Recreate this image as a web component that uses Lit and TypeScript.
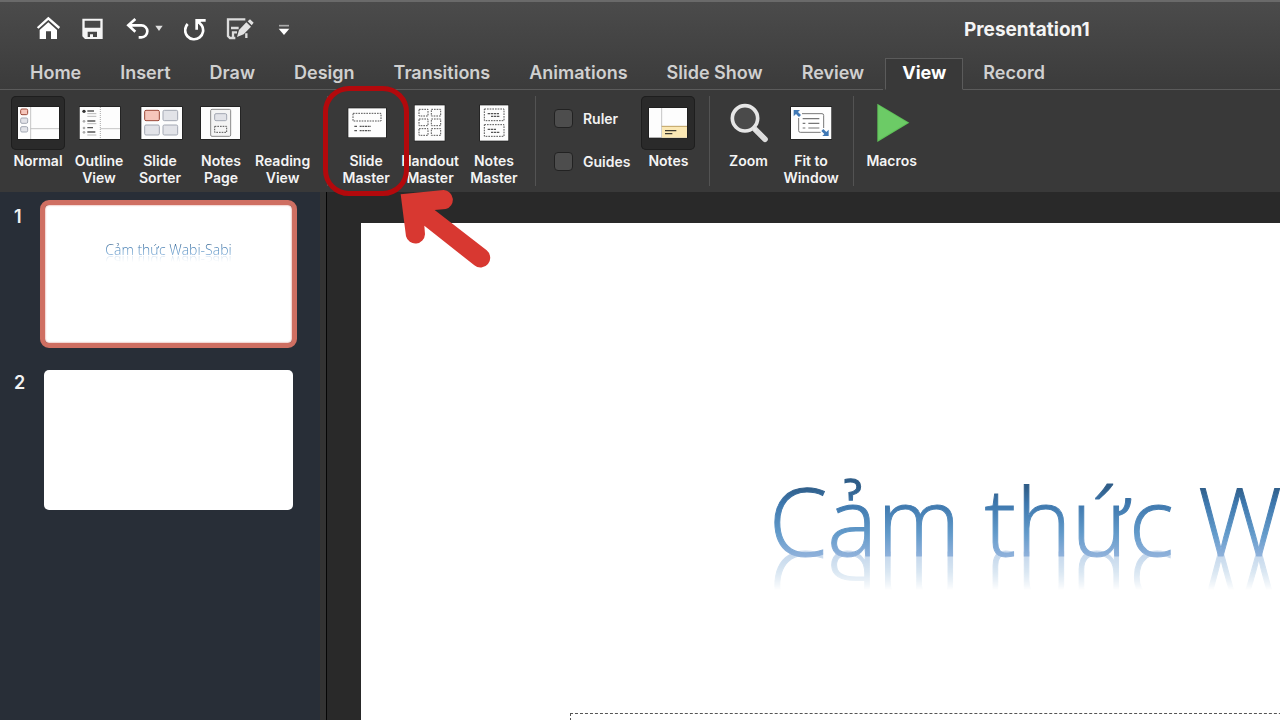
import { LitElement, html, css, svg, nothing, TemplateResult } from "lit";
import { customElement } from "lit/decorators.js";
import { classMap } from "lit/directives/class-map.js";

const tile = (body: TemplateResult) =>
  html`<svg class="tile" viewBox="0 0 162 162" aria-hidden="true">${body}</svg>`;

const paper = (x: number, y: number, w: number, h: number) => svg`
  <rect x=${x - 2} y=${y - 2} width=${w + 4} height=${h + 4} fill="#1c1c1c" />
  <rect x=${x} y=${y} width=${w} height=${h} fill="#fdfdfd" />`;

const box = (x: number, y: number, w: number, h: number, hot = false) => svg`
  <rect x=${x} y=${y} width=${w} height=${h} rx="4" stroke-width="3"
    fill=${hot ? "#f6c6bb" : "#e2e3e8"} stroke=${hot ? "#9c4a3a" : "#a3a8b3"} />`;

const dashed = (x: number, y: number, w: number, h: number) => svg`
  <rect x=${x} y=${y} width=${w} height=${h} fill="none" stroke="#555" stroke-width="3" stroke-dasharray="5 3" />`;

const icons: Record<string, TemplateResult> = {
  normal: svg`${paper(21, 33, 123, 96)}
    <path d="M59 33V129M59 98H144" stroke="#b9b9b9" stroke-width="2.5" />
    ${box(29, 39, 21, 17, true)}${box(29, 66, 21, 16)}${box(29, 92, 21, 16)}`,
  outline: svg`${paper(23, 33, 121, 96)}
    <path d="M85 33V129" stroke="#999" stroke-width="2.5" stroke-dasharray="3 3" />
    <path d="M85 98H144" stroke="#b9b9b9" stroke-width="2.5" />
    <circle cx="36" cy="46" r="5" fill="#333" />
    <g fill="#aaa"><circle cx="36" cy="76" r="4" /><circle cx="36" cy="96" r="4" /><circle cx="36" cy="109" r="4" /></g>
    <path d="M46 45H66M46 75H70M46 95H63M46 108H70" stroke="#555" stroke-width="4" />
    <path d="M46 53H73M46 61H73M46 83H73M46 117H73" stroke="#aaa" stroke-width="2.5" />`,
  sorter: svg`${paper(25, 33, 122, 96)}
    ${box(35, 43, 44, 31, true)}${box(90, 43, 44, 31)}${box(35, 87, 44, 30)}${box(90, 87, 44, 30)}`,
  page: svg`${paper(21, 33, 117, 96)}
    <rect x="50" y="40" width="60" height="81" rx="4" fill="#f4f4f4" stroke="#8a8a8a" stroke-width="3" />
    ${box(62, 53, 36, 21)}${dashed(62, 91, 36, 18)}`,
  blank: svg``,
  slideMaster: svg`${paper(28, 37, 113, 87)}${dashed(42, 52, 84, 23)}
    <path d="M46 91H54M46 104H54" stroke="#555" stroke-width="4" />
    <path d="M62 91H96M62 104H96" stroke="#555" stroke-width="4" stroke-dasharray="6 2" />`,
  handout: svg`${paper(35, 28, 90, 106)}
    ${[40, 69, 98].map((y) => svg`${dashed(48, y, 27, 20)}${dashed(85, y, 28, 20)}`)}`,
  notesMaster: svg`${paper(39, 28, 85, 106)}${dashed(52, 39, 59, 35)}${dashed(52, 86, 59, 35)}
    <path d="M62 53H98M72 61H98M62 100H88M72 109H98" stroke="#555" stroke-width="4" stroke-dasharray="7 2" />`,
  notes: svg`${paper(24, 36, 114, 89)}
    <path d="M62 36V125" stroke="#b9b9b9" stroke-width="2.5" />
    <rect x="63" y="91" width="75" height="34" fill="#fbe8b4" />
    <path d="M62 91H138" stroke="#b3924a" stroke-width="2.5" />
    <path d="M72 104H106M72 113H94" stroke="#3d3a30" stroke-width="4" />`,
  zoom: svg`
    <circle cx="72" cy="67" r="38" fill="#4a4a4a" stroke="#e6e6e6" stroke-width="11" />
    <path d="M102 100L132 130" stroke="#dcdcdc" stroke-width="17" stroke-linecap="round" />
    <path d="M95 93L106 104" stroke="#e6e6e6" stroke-width="9" />`,
  fit: svg`${paper(21, 33, 121, 96)}
    <rect x="44" y="53" width="75" height="56" rx="5" fill="#fff" stroke="#777" stroke-width="3" />
    <path d="M56 68H106M56 82H64M73 82H106M56 96H64M73 96H106" stroke="#777" stroke-width="3.5" />
    <path d="M24 36H54V66H24zM110 96H139V126H110z" fill="#fdfdfd" />
    <path d="M29 42H48L42 48L51 57L45 63L36 54L29 61zM134 120H115L121 114L112 105L118 99L127 108L134 101z" fill="#3f78b5" />`,
  macros: svg`<path d="M37 23L133 80L37 138z" fill="#5fc158" /><path d="M40 28L127 80L40 132z" fill="#6ccb66" />`,
};

interface Command { icon: string; label: string[]; on?: boolean; marked?: boolean }

const views: Command[] = [
  { icon: "normal", label: ["Normal"], on: true },
  { icon: "outline", label: ["Outline", "View"] },
  { icon: "sorter", label: ["Slide", "Sorter"] },
  { icon: "page", label: ["Notes", "Page"] },
  { icon: "blank", label: ["Reading", "View"] },
];
const masters: Command[] = [
  { icon: "slideMaster", label: ["Slide", "Master"], marked: true },
  { icon: "handout", label: ["Handout", "Master"] },
  { icon: "notesMaster", label: ["Notes", "Master"] },
];
const zooms: Command[] = [
  { icon: "zoom", label: ["Zoom"] },
  { icon: "fit", label: ["Fit to", "Window"] },
];

const tabs = ["Home", "Insert", "Draw", "Design", "Transitions", "Animations", "Slide Show", "Review", "View", "Record"];

@customElement("app-root")
export class AppRoot extends LitElement {
  static styles = css`
    :host {
      display: flex;
      flex-direction: column;
      height: 100vh;
      overflow: hidden;
      background: #292929;
      color: #f2f2f2;
      font-family: Inter, "Liberation Sans", sans-serif;
    }
    * { box-sizing: border-box; }
    button {
      border: 0;
      padding: 0;
      margin: 0;
      background: none;
      color: inherit;
      font: inherit;
    }
    svg { display: block; }
    .header {
      background: linear-gradient(#4b4b4b, #3b3b3b);
      border-top: 2px solid #6a6a6a;
    }
    .titlebar {
      display: flex;
      align-items: flex-start;
      height: 56px;
      padding: 13px 0 0 36px;
    }
    .quick { display: flex; align-items: center; gap: 20px; }
    .split { display: flex; gap: 4px; }
    .title {
      margin: 2px 0 0 670px;
      font-size: 19px;
      font-weight: 700;
      line-height: 26px;
      color: #f4f4f4;
      white-space: nowrap;
    }
    .tabs {
      display: flex;
      align-items: stretch;
      height: 32px;
    }
    .tabs::before, .tabs::after {
      content: "";
      border-bottom: 1px solid #5b5b5b;
    }
    .tabs::before { width: 10px; }
    .tabs::after { flex: 1; }
    .tab {
      padding: 0 19px 2px 20px;
      font-size: 18px;
      font-weight: 600;
      line-height: 28px;
      color: #d0d0d0;
      white-space: nowrap;
      border-bottom: 1px solid #5b5b5b;
    }
    .tab.on {
      padding: 0 16px 3px;
      margin-left: 2px;
      color: #fff;
      font-weight: 700;
      line-height: 27px;
      background: #393939;
      border: 1px solid #5b5b5b;
      border-bottom-color: #393939;
    }
    .ribbon {
      display: flex;
      padding: 6px 0 6px 11px;
      background: #393939;
    }
    .group {
      display: flex;
      align-items: flex-start;
      gap: 8px;
      height: 90px;
      padding-right: 14px;
    }
    .group:first-child { gap: 7px; padding-right: 17px; }
    .group + .group {
      padding-left: 11px;
      border-left: 1px solid #535353;
    }
    .cmd {
      display: flex;
      flex-direction: column;
      align-items: center;
      gap: 2px;
      min-width: 54px;
      font-size: 14px;
      font-weight: 600;
      line-height: 17px;
      color: #f4f4f4;
    }
    .line { display: block; white-space: nowrap; }
    .tile { width: 54px; height: 54px; border-radius: 5px; }
    .cmd.on .tile { background: #2a2a2a; box-shadow: inset 0 0 0 1px #1e1e1e; }
    .spot { position: relative; display: flex; }
    .ring {
      position: absolute;
      left: -16px;
      top: -10px;
      width: 86px;
      height: 110px;
      border: 5px solid #b3090c;
      border-radius: 26px;
      z-index: 2;
      pointer-events: none;
    }
    .arrow {
      position: absolute;
      left: 60px;
      top: 92px;
      width: 94px;
      height: 82px;
      z-index: 3;
      pointer-events: none;
    }
    .checks {
      display: flex;
      flex-direction: column;
      gap: 19px;
      padding: 10px 3px 0 7px;
    }
    .check {
      display: flex;
      align-items: center;
      gap: 10px;
      height: 24px;
      font-size: 14px;
      font-weight: 600;
    }
    .check input {
      appearance: none;
      width: 19px;
      height: 19px;
      margin: 0;
      border: 1px solid #222;
      border-radius: 4px;
      background: #4d4d4d;
    }
    .body { display: flex; flex: 1; min-height: 0; }
    .panel {
      flex: none;
      display: flex;
      flex-direction: column;
      gap: 18px;
      width: 327px;
      padding: 8px 24px 0 14px;
      background: #282e37;
      border-right: 1px solid #050505;
      box-shadow: inset -6px 0 #333;
    }
    .item { display: flex; align-items: flex-start; gap: 10px; }
    .num { width: 16px; font-size: 18px; font-weight: 600; line-height: 34px; flex: none; }
    .thumb {
      width: 257px;
      height: 148px;
      padding-top: 34px;
      border: 4px solid transparent;
      border-radius: 9px;
      background: #fff padding-box;
      text-align: center;
    }
    .thumb.on { border: 5px solid #cf6f62; box-shadow: inset 0 0 2px #cf6f62; }
    .art {
      display: inline-block;
      font-family: "Open Sans", Lato, sans-serif;
      font-weight: 300;
      color: transparent;
      background: linear-gradient(#2f5d88 20%, #3d77ad 35%, #629aca 62%, #8db0da 82%);
      -webkit-background-clip: text;
      background-clip: text;
      white-space: nowrap;
    }
    .small {
      font-size: 14px;
      line-height: 20px;
      -webkit-box-reflect: below -9px linear-gradient(transparent 45%, rgba(0, 0, 0, 0.6));
    }
    .stage { flex: 1; min-width: 0; overflow: hidden; padding: 31px 0 0 34px; }
    .slide {
      width: 1704px;
      height: 966px;
      padding-top: 242px;
      background: #fff;
    }
    .slide .art {
      margin: 0 0 0 408px;
      font-size: 94px;
      line-height: 110px;
      -webkit-text-stroke: 1px transparent;
      -webkit-box-reflect: below -42px linear-gradient(transparent 48%, rgba(0, 0, 0, 0.5) 82%);
    }
    .holder {
      height: 240px;
      margin: 138px 209px 0;
      border: 1px dashed #555;
    }
  `;

  private command(c: Command): TemplateResult {
    const button = html`<button class=${classMap({ cmd: true, on: !!c.on })}>
      ${tile(icons[c.icon])}
      <span>${c.label.map((l) => html`<span class="line">${l}</span>`)}</span>
    </button>`;
    if (!c.marked) return button;
    return html`<div class="spot">${button}
      <span class="ring"></span>
      <svg class="arrow" viewBox="237 324 282 246" aria-hidden="true">
        <path fill="#d83831" d="M242 343L371 330A29 29 0 0 1 377 387L344 390L500 511A29 29 0 0 1 463 556L313 437L315 463A29 29 0 0 1 258 469z" />
      </svg>
    </div>`;
  }

  render() {
    return html`
      <header class="header">
        <div class="titlebar">
          <div class="quick">
            <button aria-label="Home"><svg width="26" height="26" viewBox="108 45 78 78" aria-hidden="true">
              <path d="M113 84L145 55L178 84" fill="none" stroke="#fff" stroke-width="7" />
              <path d="M119 90L145 67L171 90V117H153V94H138V117H119z" fill="#fff" />
            </svg></button>
            <button aria-label="Save"><svg width="24" height="26" viewBox="246 45 72 78" aria-hidden="true">
              <path fill="#f4f4f4" fill-rule="evenodd" d="M247 56H308V117H255L247 109zM254 62V83H301V62zM263 95V111H270V103H279V111H291V95z" />
            </svg></button>
            <div class="split">
              <button aria-label="Undo"><svg width="24" height="26" viewBox="378 45 72 78" aria-hidden="true">
                <path d="M406 57L385 76L406 95M386 76H424A18 18 0 0 1 424 112H416" fill="none" stroke="#fff" stroke-width="8" />
              </svg></button>
              <button aria-label="Undo history"><svg width="10" height="26" viewBox="468 45 30 78" aria-hidden="true">
                <path d="M472 77H494L483 93z" fill="#e0e0e0" />
              </svg></button>
            </div>
            <button aria-label="Repeat"><svg width="22" height="26" viewBox="552 45 66 78" aria-hidden="true">
              <path d="M563 72A27 27 0 1 0 605 76L594 64" fill="none" stroke="#fff" stroke-width="8" />
              <path d="M586 57H617V65H603L594 72V89H586z" fill="#fff" />
            </svg></button>
            <button aria-label="Save with edits"><svg width="28" height="26" viewBox="678 45 84 78" aria-hidden="true">
              <path d="M736 58H684V108L690 114H706M739 114V100M693 84H716M699 113V97H711" fill="none" stroke="#dcdcdc" stroke-width="7" />
              <path d="M711 111L717 90L739 67L753 80L731 103zM743 64L750 58L761 68L755 76z" fill="#e2e2e2" />
            </svg></button>
            <button aria-label="Customize toolbar"><svg width="20" height="26" viewBox="822 45 60 78" aria-hidden="true">
              <path d="M837 77H867" stroke="#aaa" stroke-width="5" /><path d="M836 86H868L852 105z" fill="#fff" />
            </svg></button>
          </div>
          <h1 class="title">Presentation1</h1>
        </div>
        <nav class="tabs">
          ${tabs.map((t) => html`<button class=${classMap({ tab: true, on: t === "View" })}>${t}</button>`)}
        </nav>
      </header>
      <div class="ribbon">
        <div class="group">${views.map((c) => this.command(c))}</div>
        <div class="group">${masters.map((c) => this.command(c))}</div>
        <div class="group">
          <div class="checks">
            <label class="check"><input type="checkbox" />Ruler</label>
            <label class="check"><input type="checkbox" />Guides</label>
          </div>
          ${this.command({ icon: "notes", label: ["Notes"], on: true })}
        </div>
        <div class="group">${zooms.map((c) => this.command(c))}</div>
        <div class="group">${this.command({ icon: "macros", label: ["Macros"] })}</div>
      </div>
      <main class="body">
        <aside class="panel">
          ${["Cảm thức Wabi-Sabi", ""].map((t, i) => html`
            <div class="item">
              <span class="num">${i + 1}</span>
              <div class=${classMap({ thumb: true, on: i === 0 })}>${t ? html`<span class="art small">${t}</span>` : nothing}</div>
            </div>`)}
        </aside>
        <section class="stage">
          <div class="slide">
            <h2 class="art">Cảm thức Wabi-Sabi</h2>
            <div class="holder"></div>
          </div>
        </section>
      </main>`;
  }
}
